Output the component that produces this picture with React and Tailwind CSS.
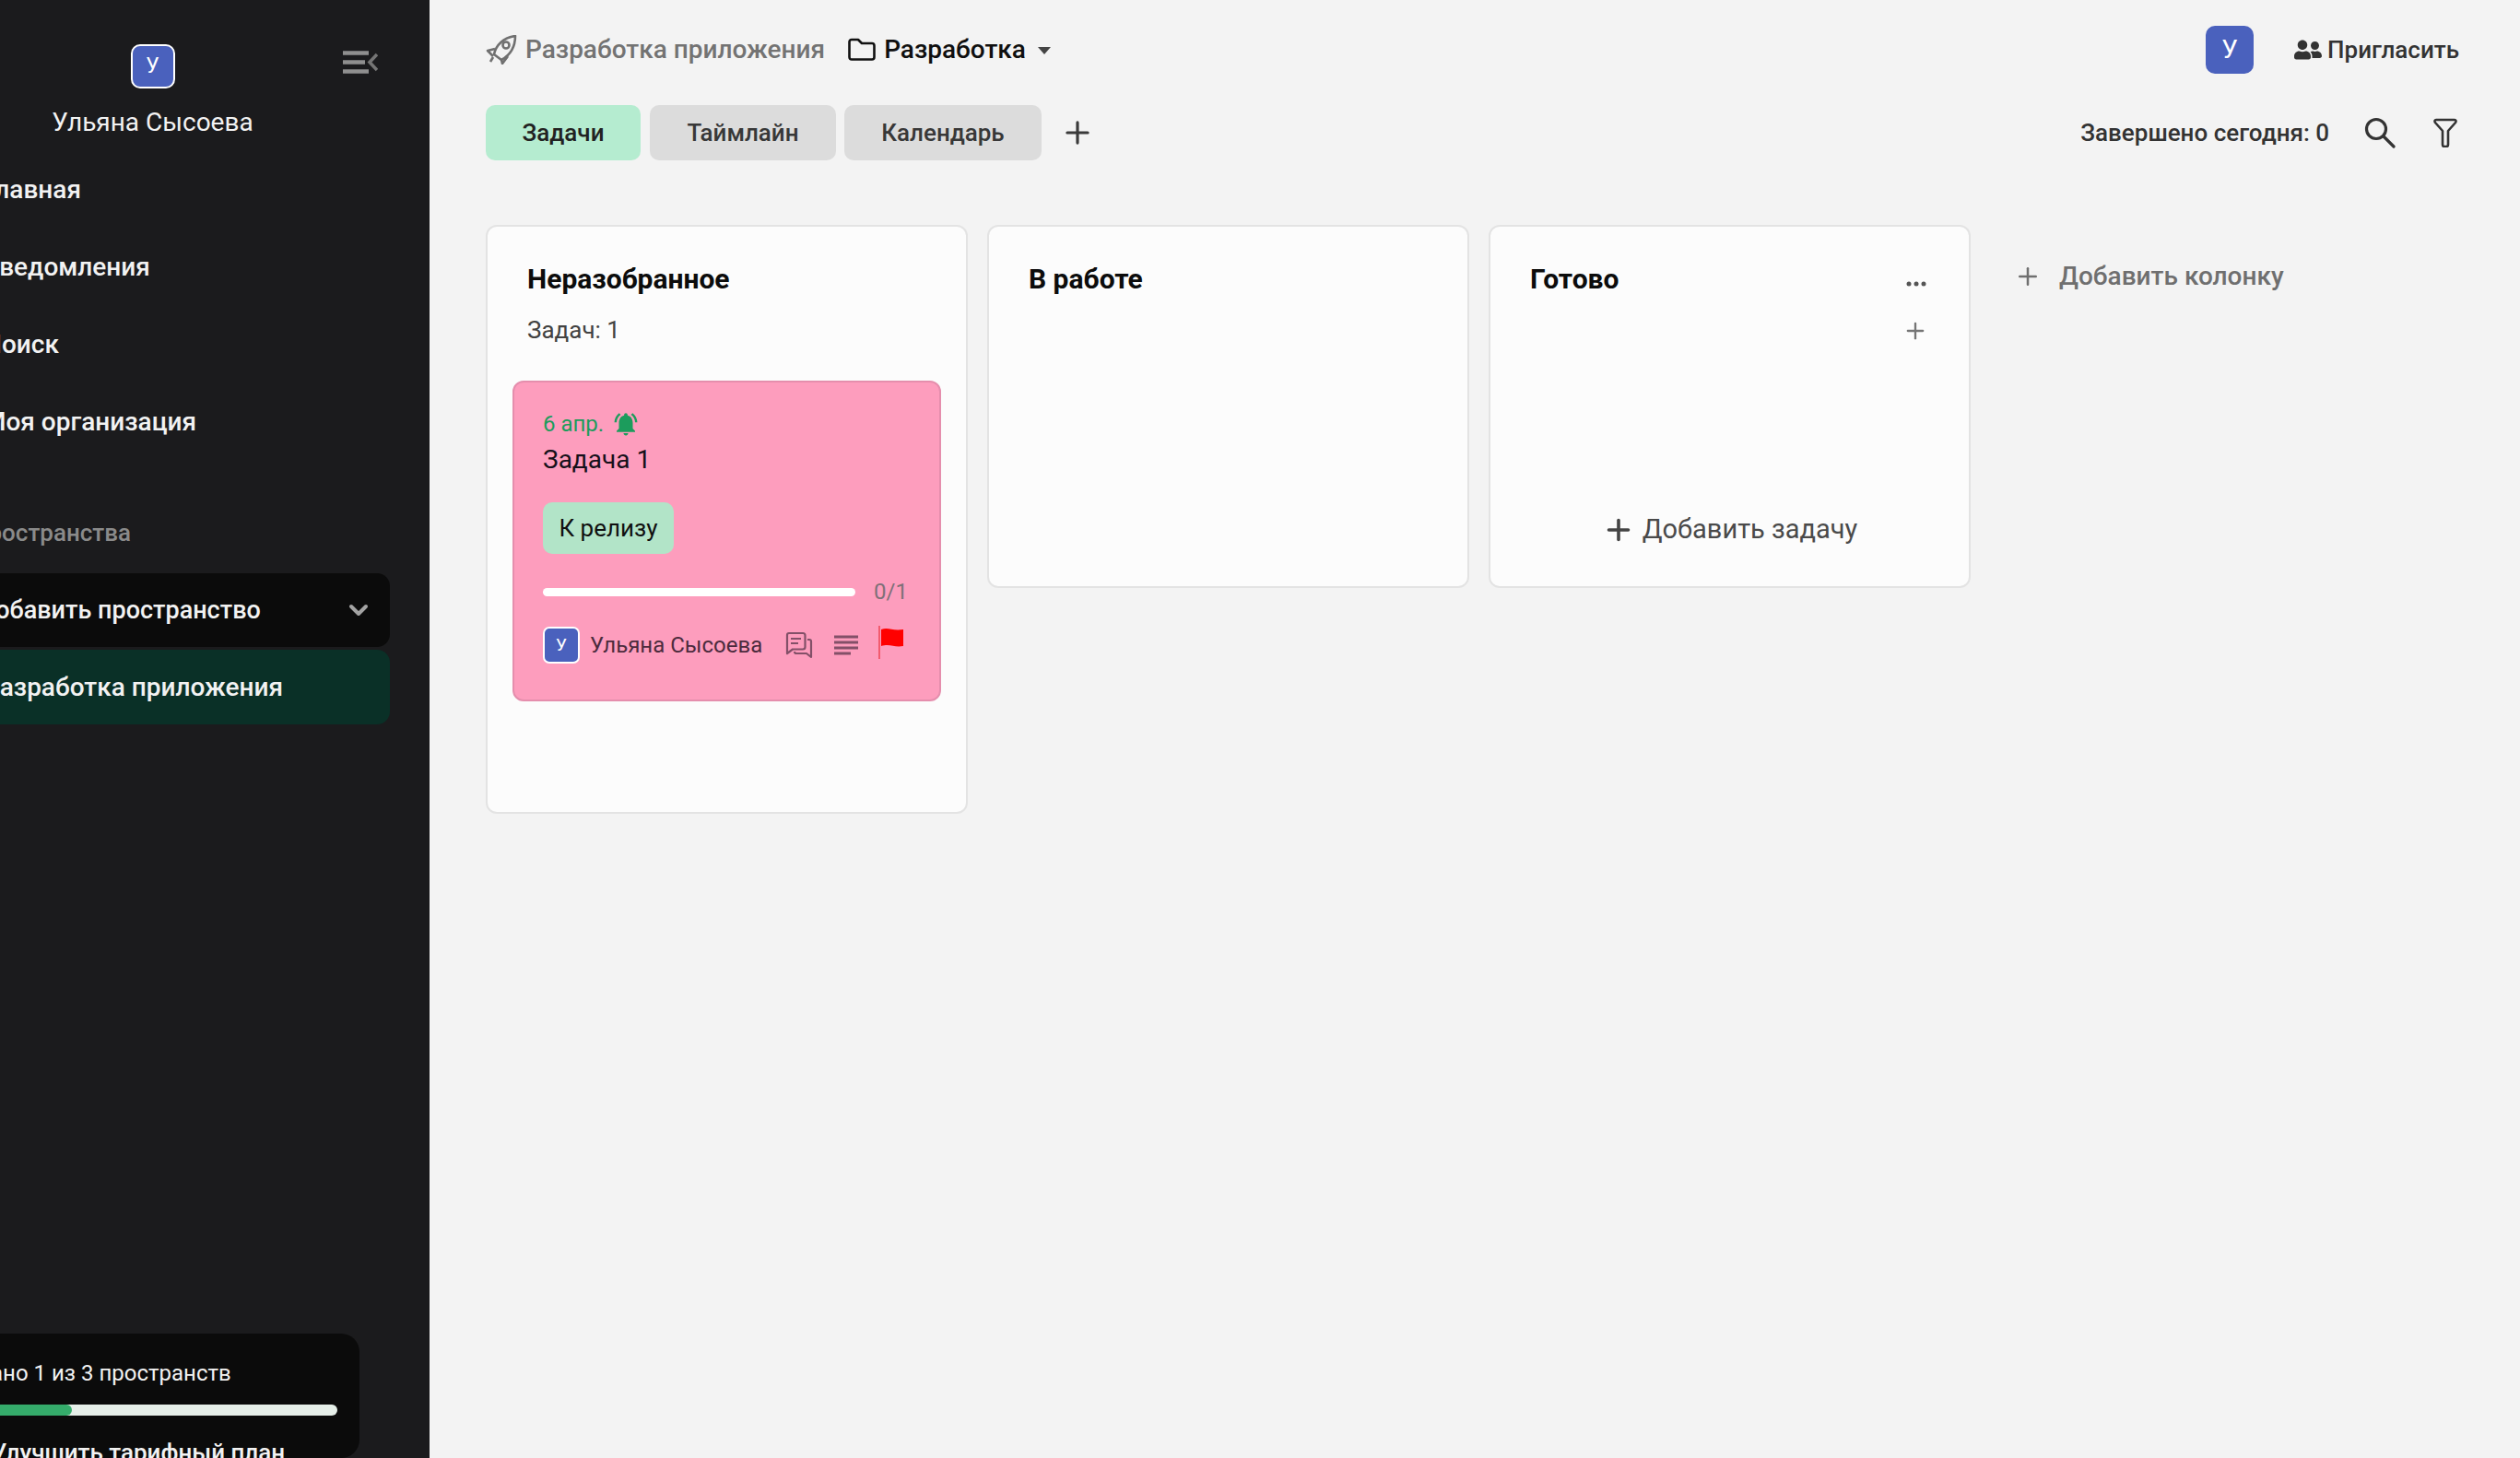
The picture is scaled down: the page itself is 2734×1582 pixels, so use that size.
import React from 'react';
import { Plus, ChevronDown } from 'lucide-react';
import { FaUserFriends } from 'react-icons/fa';
import { MdNotificationsActive } from 'react-icons/md';

const NAV = ['Главная', 'Уведомления', 'Поиск', 'Моя организация'];

function Avatar({ className }) {
  return (
    <div className={`flex items-center justify-center bg-[#4a61bd] text-white ${className}`}>У</div>
  );
}

function Sidebar() {
  return (
    <aside className="w-[466px] h-full shrink-0 bg-[#1b1b1d] overflow-hidden flex flex-col text-[#f2f2f2]">
      <div className="relative flex flex-col items-center w-[331px] pt-[48px]">
        <Avatar className="w-[48px] h-[48px] rounded-[10px] border-2 border-white text-[23px]" />
        <div className="mt-[19px] text-[28px] leading-[36px]">Ульяна Сысоева</div>
      </div>
      <div className="-mt-[96px] ml-[372px] mb-[32px] h-[40px]">
        <svg width="38" height="25" viewBox="0 0 38 25" fill="none" stroke="#8f8f8f" strokeWidth="4.5">
          <path d="M0 2.500h28M0 12.500h24M0 22.500h28" />
          <path d="M37 4l-8 8.500 8 8.500" stroke="#757575" strokeWidth="3.500" />
        </svg>
      </div>
      <nav className="mt-[37px] flex flex-col -ml-[18px]">
        {NAV.map((t) => (
          <div key={t} className="h-[84px] flex items-center text-[28px] font-medium">{t}</div>
        ))}
      </nav>
      <div className="mt-[60px] -ml-[31px] text-[26px] font-medium text-[#8a8a8a] leading-[36px]">Пространства</div>
      <div className="mt-[26px] w-[423px] h-[80px] rounded-r-[14px] bg-[#0b0b0b] flex items-center justify-between pr-[18px]">
        <span className="-ml-[25px] text-[27px] font-medium whitespace-nowrap">Добавить пространство</span>
        <ChevronDown size={32} strokeWidth={3} className="text-[#a3a3a3]" />
      </div>
      <div className="mt-[3px] w-[423px] h-[81px] rounded-r-[14px] bg-[#0a3027] flex items-center">
        <span className="-ml-[18px] text-[28px] font-medium whitespace-nowrap">Разработка приложения</span>
      </div>
      <div className="mt-auto w-[390px] h-[135px] shrink-0 rounded-r-[20px] bg-[#0b0b0b]">
        <div className="pt-[28px] -ml-[66px] text-[24px] leading-[30px] whitespace-nowrap">Создано 1 из 3 пространств</div>
        <div className="mt-[19px] w-[366px] h-[12px] rounded-r-full bg-[#e6efe9] overflow-hidden">
          <div className="w-[78px] h-full rounded-r-full bg-[#35ac6b]" />
        </div>
        <div className="mt-[23px] -ml-[9px] text-[26px] font-medium leading-[34px] whitespace-nowrap">Улучшить тарифный план</div>
      </div>
    </aside>
  );
}

function Header() {
  return (
    <>
      <div className="flex items-center h-[52px]">
        <svg width="34" height="32" viewBox="0 0 34 32" fill="none" stroke="#707070" strokeWidth="2.600" strokeLinejoin="round">
          <path d="M9 21C11 11 19 3 32 1c0 12-6 21-15 26z" />
          <circle cx="22" cy="11" r="3.500" />
          <path d="M10 15l-8 2 6 6M17 27l1 4 6-8" />
          <path d="M8 24l-3 5" />
        </svg>
        <span className="ml-[9px] text-[28px] font-medium text-[#737373]">Разработка приложения</span>
        <svg width="30" height="26" viewBox="0 0 30 26" fill="none" stroke="#111" strokeWidth="2.600" strokeLinejoin="round" className="ml-[25px]">
          <path d="M4 2h7l4 4h11c1.500 0 2.500 1 2.500 2.500V21c0 1.500-1 2.500-2.500 2.500H4c-1.500 0-2.500-1-2.500-2.500V4.500C1.500 3 2.500 2 4 2z" />
        </svg>
        <span className="ml-[9px] text-[28px] font-medium text-[#0f0f0f]">Разработка</span>
        <svg width="16" height="10" viewBox="0 0 16 10" className="ml-[12px] mt-[2px]">
          <path d="M1 1h14l-7 8z" fill="#444" />
        </svg>
        <Avatar className="ml-auto w-[52px] h-[52px] rounded-[10px] text-[28px]" />
        <FaUserFriends size={30} className="ml-[44px] text-[#333]" />
        <span className="ml-[6px] text-[26px] font-medium text-[#333]">Пригласить</span>
      </div>
      <div className="mt-[34px] flex items-center h-[60px]">
        <div className="w-[168px] h-full rounded-[10px] bg-[#b5ecd0] flex items-center justify-center text-[26px] font-medium text-[#222]">Задачи</div>
        <div className="ml-[10px] w-[202px] h-full rounded-[10px] bg-[#dcdcdc] flex items-center justify-center text-[26px] font-medium text-[#383838]">Таймлайн</div>
        <div className="ml-[9px] w-[214px] h-full rounded-[10px] bg-[#dcdcdc] flex items-center justify-center text-[26px] font-medium text-[#383838]">Календарь</div>
        <Plus size={38} strokeWidth={2} className="ml-[20px] text-[#3a3a3a]" />
        <span className="ml-auto text-[26px] font-medium text-[#333]">Завершено сегодня: 0</span>
        <svg width="34" height="34" viewBox="0 0 34 34" fill="none" stroke="#333" strokeWidth="3.200" strokeLinecap="round" className="ml-[38px]">
          <circle cx="13" cy="13" r="10.500" />
          <path d="M21 21l11 11" />
        </svg>
        <svg width="26" height="32" viewBox="0 0 26 32" fill="none" stroke="#333" strokeWidth="2.600" strokeLinejoin="round" className="ml-[41px] mr-[2px]">
          <path d="M3 2h20c1.500 0 2 1.500 1 3l-8 9v15c0 1.500-1 2-2 2h-2c-1 0-2-.5-2-2V14L2 5C1 3.500 1.500 2 3 2z" />
        </svg>
      </div>
    </>
  );
}

function Column({ title, className, children }) {
  return (
    <div className={`w-[523px] shrink-0 flex flex-col rounded-[12px] border-2 border-[#e3e3e3] bg-[#fcfcfc] ${className}`}>
      <div className="pt-[36px] px-[43px] flex items-center justify-between">
        <span className="text-[30px] leading-[42px] font-bold text-[#0c0c0c]">{title}</span>
      </div>
      {children}
    </div>
  );
}

function TaskCard() {
  return (
    <div className="mx-[27px] mt-[37px] h-[348px] rounded-[12px] border-2 border-[#e58ead] bg-[#fd9dbd] px-[31px] pt-[29px]">
      <div className="flex items-center h-[32px] text-[#1c9c5c] text-[24px]">
        <span>6 апр.</span>
        <MdNotificationsActive size={30} className="ml-[9px]" />
      </div>
      <div className="mt-[3px] text-[28px] leading-[40px] text-[#15101a]">Задача 1</div>
      <div className="mt-[26px] w-[142px] h-[56px] rounded-[10px] bg-[#b2e4c8] flex items-center justify-center text-[26px] text-[#101010]">К релизу</div>
      <div className="mt-[27px] flex items-center h-[28px]">
        <div className="w-[339px] h-[9px] rounded-full bg-white" />
        <span className="ml-[20px] text-[24px] text-[#7f7078]">0/1</span>
      </div>
      <div className="mt-[24px] flex items-center h-[40px]">
        <Avatar className="w-[40px] h-[40px] rounded-[7px] border-2 border-white text-[19px]" />
        <span className="ml-[11px] text-[24px] text-[#4c2b3d] whitespace-nowrap">Ульяна Сысоева</span>
        <svg width="30" height="30" viewBox="0 0 30 30" fill="none" stroke="#835068" strokeWidth="2.200" strokeLinejoin="round" className="ml-[25px]">
          <path d="M4 2h15c1.500 0 2.500 1 2.500 2.500V17c0 1.500-1 2.500-2.500 2.500H8L2 24V4c0-1 1-2 2-2z" />
          <path d="M6 8h11M6 13h8" />
          <path d="M24 9h2c1 0 2 1 2 2v17l-5-4H12c-1 0-2-1-2-2" />
        </svg>
        <svg width="26" height="22" viewBox="0 0 26 22" stroke="#835068" strokeWidth="3" className="ml-[23px]">
          <path d="M0 2h26M0 8h26M0 14h26M0 20h18" />
        </svg>
        <svg width="30" height="36" viewBox="0 0 30 36" className="ml-[22px] -mt-[6px]">
          <rect x="0" y="0" width="2" height="36" fill="#f25b6e" />
          <path d="M3 4c8-3 12 2 24 0v18c-10 2-14-3-24 0z" fill="#ff0000" />
        </svg>
      </div>
    </div>
  );
}

export default function App() {
  return (
    <div className="w-[2734px] h-[1582px] flex overflow-hidden bg-[#f3f3f3] font-['Roboto',sans-serif]">
      <Sidebar />
      <main className="flex-1 pl-[61px] pr-[66px] pt-[28px]">
        <Header />
        <div className="mt-[70px] flex items-start gap-[21px]">
          <Column title="Неразобранное" className="h-[639px]">
            <div className="mt-[16px] px-[43px] text-[26px] leading-[36px] text-[#424242]">Задач: 1</div>
            <TaskCard />
          </Column>
          <Column title="В работе" className="h-[394px]" />
          <Column title="Готово" className="h-[394px]">
            <div className="-mt-[19px] pr-[46px] flex justify-end">
              <svg width="22" height="6" viewBox="0 0 22 6" fill="#555">
                <circle cx="3" cy="3" r="2.500" />
                <circle cx="11" cy="3" r="2.500" />
                <circle cx="19" cy="3" r="2.500" />
              </svg>
            </div>
            <div className="mt-[34px] pr-[44px] flex justify-end">
              <Plus size={28} strokeWidth={2} className="text-[#757575]" />
            </div>
            <div className="mt-[180px] flex items-center justify-center text-[#4a4a4a]">
              <Plus size={36} strokeWidth={2.4} className="text-[#444]" />
              <span className="ml-[8px] text-[29px]">Добавить задачу</span>
            </div>
          </Column>
          <div className="ml-[26px] mt-[35px] flex items-center text-[#6f6f6f]">
            <Plus size={30} strokeWidth={2} />
            <span className="ml-[19px] text-[28px] font-medium whitespace-nowrap">Добавить колонку</span>
          </div>
        </div>
      </main>
    </div>
  );
}
